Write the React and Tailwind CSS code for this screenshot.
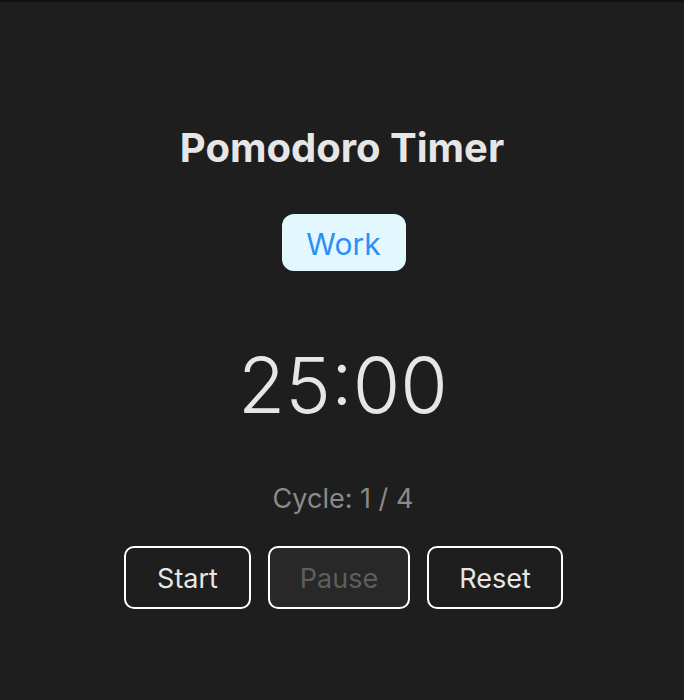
export default function App() {
  return (
    <div
      className="w-full h-[700px] bg-[#1e1e1e] border-t-2 border-[#111111] flex flex-col items-center"
      style={{ fontFamily: "Inter, 'Noto Sans', sans-serif" }}
    >
      <h1 className="mt-[122px] text-[40px] leading-[48px] font-bold text-[#e6e6e6]">
        Pomodoro Timer
      </h1>
      <div className="mt-[42px] ml-[3px] h-[57px] w-[124px] pt-[3px] rounded-[12px] bg-[#e3f7ff] flex items-center justify-center text-[30px] text-[#2b90f5]">
        Work
      </div>
      <div className="mt-[68px] ml-[2px] text-[77px] leading-[92px] font-light text-[#e6e6e6]">
        25:00
      </div>
      <div className="mt-[52px] ml-[2px] text-[27px] leading-[32px] text-[#8a8a8a]">
        Cycle: 1 / 4
      </div>
      <div className="mt-[31px] flex gap-[17px] pl-[3px]">
        <button className="h-[63px] w-[127px] pt-[3px] rounded-[10px] border-2 border-white bg-[#1e1e1e] text-[27px] text-[#e6e6e6]">
          Start
        </button>
        <button className="h-[63px] w-[142px] pt-[3px] rounded-[10px] border-2 border-white bg-[#282828] text-[27px] text-[#5e5e5e]">
          Pause
        </button>
        <button className="h-[63px] w-[136px] pt-[3px] rounded-[10px] border-2 border-white bg-[#1e1e1e] text-[27px] text-[#e6e6e6]">
          Reset
        </button>
      </div>
    </div>
  );
}
